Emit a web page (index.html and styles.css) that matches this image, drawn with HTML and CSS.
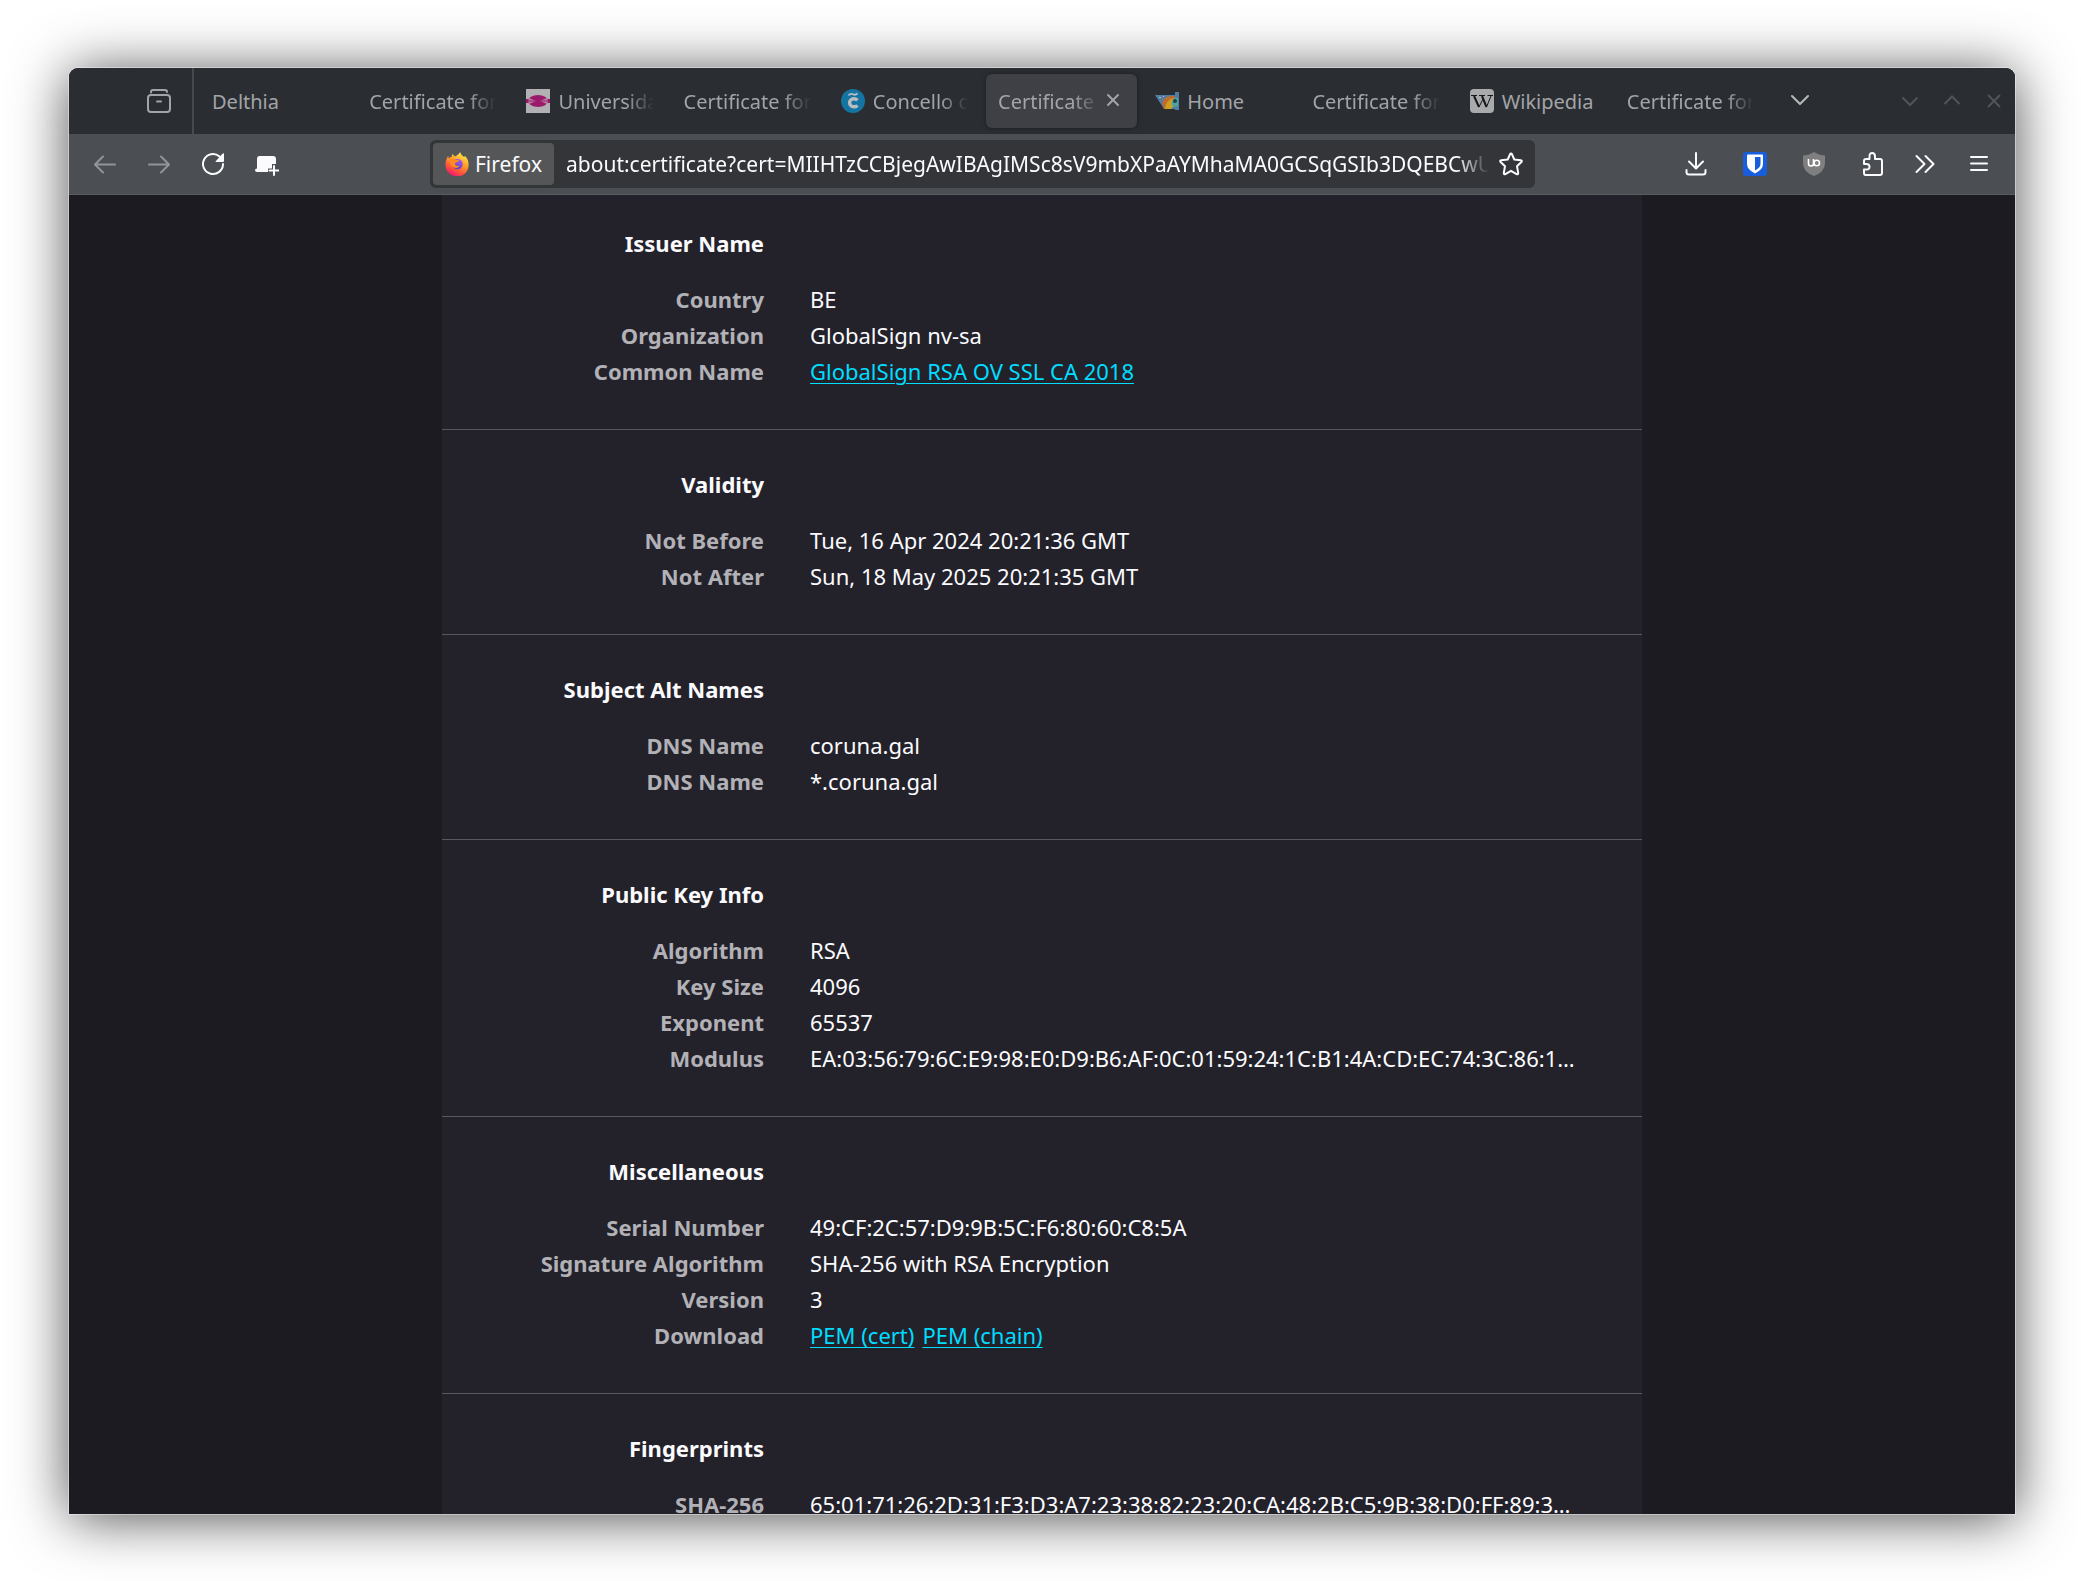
FILE: index.html
```html
<!DOCTYPE html>
<html lang="en">
<head>
<meta charset="utf-8">
<title>Certificate for coruna.gal</title>
<link rel="stylesheet" href="styles.css">
</head>
<body>
<div class="window">
  <header class="tabbar">
    <button class="recent" aria-label="View recent browsing">
      <svg class="icon" viewBox="0 0 24 24" fill="none" stroke="currentColor" stroke-width="2" stroke-linecap="round"><path d="M4 3.500V3Q4 1 6 1H18Q20 1 20 3"/><rect x="1" y="6" width="22" height="17" rx="3"/><path d="M10 12.500H14"/></svg>
    </button>
    <nav class="tabs">
      <a class="tab" href="#"><span class="tab-label">Delthia</span></a>
      <a class="tab" href="#"><span class="tab-label long">Certificate for</span></a>
      <a class="tab" href="#">
        <svg class="icon" viewBox="0 0 24 24"><path fill="#b1b1b3" d="M0 0h24v24H0z"/><ellipse cx="12" cy="12" rx="10" ry="6" fill="#9b1a6c"/><path fill="#9b1a6c" d="M0 10h3v4H0zM21 10h3v4h-3z"/><path fill="#b884a6" d="M3 9l7 3-7 3-1-3zM21 9l-7 3 7 3 1-3z"/><path fill="none" stroke="#9b1a6c" stroke-width="1" d="M0 12h24"/></svg>
        <span class="tab-label long">Universidade</span>
      </a>
      <a class="tab" href="#"><span class="tab-label long">Certificate for</span></a>
      <a class="tab" href="#">
        <svg class="icon" viewBox="0 0 24 24"><circle cx="12" cy="12" r="12" fill="#1474a2"/><path fill="none" stroke="#b9bdc2" stroke-width="3.400" d="M16.500 11.300Q15 9.800 12.600 9.800A4 4 0 0 0 12.600 17.800Q15 17.800 16.500 16.400"/><path fill="none" stroke="#b9bdc2" stroke-width="1.800" d="M7.500 6.500Q9.500 4 12 5.300T16.500 4.300"/></svg>
        <span class="tab-label long">Concello da</span>
      </a>
      <div class="tab tab-hover">
        <span class="tab-label long">Certificate for</span>
        <button class="tab-close" aria-label="Close tab"><svg class="icon" viewBox="0 0 24 24" fill="none" stroke="currentColor" stroke-width="2" stroke-linecap="round"><path d="M7 6l10 10M17 6L7 16"/></svg></button>
      </div>
      <a class="tab" href="#">
        <svg class="icon" viewBox="0 0 24 24"><path fill="#4f7da3" d="M0 6h20V3h4v18h-4v-1H9z"/><path fill="#c06a2c" d="M7 14Q9 6 19 7L21 9Q12 10 11 20H9z"/><path fill="#c9a024" d="M10 20Q11 10 19 9v8l-3 3z"/><path fill="#4da3a3" d="M17 12q2-4 6-3v8l-4 1q-3-2-2-6z"/><circle cx="20" cy="12" r="2" fill="#23404d"/><path fill="#a8bcc8" d="M4 8h2v1H4zM8 7h1v1H8z"/></svg>
        <span class="tab-label">Home</span>
      </a>
      <a class="tab" href="#"><span class="tab-label long">Certificate for</span></a>
      <a class="tab" href="#">
        <svg class="icon" viewBox="0 0 24 24"><rect width="24" height="24" rx="4" fill="#a9aaac"/><path fill="none" stroke="#17181a" stroke-width="1" d="M1 6.500h6M9 6.500h6M17.500 6.500H23"/><path fill="none" stroke="#17181a" stroke-width="2" d="M4 7l5 11M12 7l4.500 11"/><path fill="none" stroke="#17181a" stroke-width="1" d="M9 18l4-8M16.500 18L21 7"/></svg>
        <span class="tab-label">Wikipedia</span>
      </a>
      <a class="tab" href="#"><span class="tab-label long">Certificate for</span></a>
    </nav>
    <button class="all-tabs" aria-label="List all tabs"><svg class="icon" viewBox="0 0 24 24" fill="none" stroke="currentColor" stroke-width="2" stroke-linecap="round" stroke-linejoin="round"><path d="M4 7l8 8 8-8"/></svg></button>
    <div class="window-controls">
      <button aria-label="Minimize"><svg class="icon" viewBox="0 0 24 24" fill="none" stroke="currentColor" stroke-width="2"><path d="M4.500 8.500l7.500 7.500 7.500-7.500"/></svg></button>
      <button aria-label="Maximize"><svg class="icon" viewBox="0 0 24 24" fill="none" stroke="currentColor" stroke-width="2"><path d="M4.500 15l7.500-7.500 7.500 7.500"/></svg></button>
      <button aria-label="Close"><svg class="icon" viewBox="0 0 24 24" fill="none" stroke="currentColor" stroke-width="2"><path d="M6 6l12 12M18 6L6 18"/></svg></button>
    </div>
  </header>

  <div class="toolbar">
    <div class="nav-buttons">
      <button class="off" aria-label="Back" disabled><svg class="icon" viewBox="0 0 24 24" fill="none" stroke="currentColor" stroke-width="2" stroke-linecap="round" stroke-linejoin="round"><path d="M22 12.500H2.500M10 4.500l-8 8 8 8"/></svg></button>
      <button class="off" aria-label="Forward" disabled><svg class="icon" viewBox="0 0 24 24" fill="none" stroke="currentColor" stroke-width="2" stroke-linecap="round" stroke-linejoin="round"><path d="M2 12.500h19.500M14 4.500l8 8-8 8"/></svg></button>
      <button aria-label="Reload"><svg class="icon" viewBox="0 0 24 24" fill="none" stroke="currentColor" stroke-width="2" stroke-linecap="round"><path d="M22 12A10 10 0 1 1 18.500 4.400"/><path fill="currentColor" stroke="none" d="M23 2v7q0 1-1 1h-7q-1 0-.3-.8l6.700-7.500Q23 .5 23 2z"/></svg></button>
      <button aria-label="New window extension"><svg class="icon" viewBox="0 0 24 24"><path fill="currentColor" d="M4.500 4H18q3 0 3 3v5h-4v4.500h-4V20H2q-2-.2-2-2 0-1.500 2-1.500V7Q2 4 4.500 4z"/><path fill="none" stroke="currentColor" stroke-width="2" stroke-linecap="round" d="M19 14v9M14.500 18.500h9"/></svg></button>
    </div>
    <form class="urlbar">
      <button class="identity" type="button">
        <svg class="icon" viewBox="0 0 24 24">
          <defs>
            <linearGradient id="flame" x1="0.8" y1="0" x2="0.3" y2="1"><stop offset="0" stop-color="#fff44f"/><stop offset="0.4" stop-color="#ffa22c"/><stop offset="0.75" stop-color="#ff4f3c"/><stop offset="1" stop-color="#e8117f"/></linearGradient>
            <linearGradient id="globe" x1="0.6" y1="0" x2="0.4" y2="1"><stop offset="0" stop-color="#b060e8"/><stop offset="1" stop-color="#5340c8"/></linearGradient>
          </defs>
          <path fill="url(#flame)" d="M15 0q1 3 4 5l1-1q4 4 3.500 9.500A11.500 11.300 0 0 1 .5 13Q.3 8 3 4l1 2.500Q5 5 7 4.500L7 2q2 1 3 2.500 2-1 3-2Q14.500 1.500 15 0z"/>
          <circle cx="12.500" cy="12" r="5.200" fill="url(#globe)"/>
          <path fill="#ff8a1e" d="M5 7q4-1.500 6 1h3q-.5 2-3 2.500-2 1-.5 2.500 2 1.500 4.500.5-2 3.500-6 2Q4 13.500 5 7z"/>
        </svg>
        <span>Firefox</span>
      </button>
      <input class="address" type="text" aria-label="Address" value="about:certificate?cert=MIIHTzCCBjegAwIBAgIMSc8sV9mbXPaAYMhaMA0GCSqGSIb3DQEBCwUAMFAxCzAJBgNV">
      <button class="star" type="button" aria-label="Bookmark this page"><svg class="icon" viewBox="0 0 24 24" fill="none" stroke="currentColor" stroke-width="2" stroke-linejoin="round"><path d="M12 1.500Q12.600 1.500 13 2.300L15.300 7.500 21.800 8.300Q23.500 8.700 22.400 10L18 14.200 19.200 21Q19.200 22.800 17.600 22.100L12 18.800 6.400 22.100Q4.800 22.800 4.800 21L6 14.200 1.600 10Q.5 8.700 2.200 8.300L8.700 7.500 11 2.300Q11.400 1.500 12 1.500z"/></svg></button>
    </form>
    <div class="actions">
      <button aria-label="Downloads"><svg class="icon" viewBox="0 0 24 24" fill="none" stroke="currentColor" stroke-width="2" stroke-linecap="round" stroke-linejoin="round"><path d="M12 1v15M5 9.500l7 7 7-7M2.500 18v2q0 2.500 2.500 2.500h14q2.500 0 2.500-2.500v-2"/></svg></button>
      <button aria-label="Bitwarden"><svg class="icon" viewBox="0 0 24 24"><rect width="24" height="24" rx="3" fill="#175ddc"/><path fill="#fff" fill-rule="evenodd" d="M4 3.500Q4 2.500 5 2.500h14q1 0 1 1V12q0 5.500-8 9.500-8-4-8-9.500zM12 5v13.500q5.500-3 5.500-6.500V5z"/></svg></button>
      <button aria-label="uBlock Origin"><svg class="icon" viewBox="0 0 24 24"><path fill="#7f7f80" d="M12 0q6 3.500 11 3.500V11q0 9-11 13Q1 20 1 11V3.500Q6 3.500 12 0z"/><path fill="none" stroke="#fff" stroke-width="1.600" d="M6.500 7v4.500a2.500 2.500 0 0 0 5 0V7M11.500 11v3"/><circle cx="14.800" cy="11" r="2.700" fill="none" stroke="#fff" stroke-width="1.600"/></svg></button>
      <button aria-label="Extensions"><svg class="icon" viewBox="0 0 24 24" fill="none" stroke="currentColor" stroke-width="2" stroke-linejoin="round"><path d="M4 23h15q2 0 2-2V9q0-2-2-2h-5V4.500Q14 1 11.200 1T8.500 4.500V7H5Q3 7 3 9v3h2.500q3 0 3 2.800t-3 2.700H3V21q0 2 2 2z"/></svg></button>
      <button class="overflow" aria-label="More tools"><svg class="icon" viewBox="0 0 24 24" fill="none" stroke="currentColor" stroke-width="2" stroke-linecap="round" stroke-linejoin="round"><path d="M3.500 4l8 8-8 8M12.500 4l8 8-8 8"/></svg></button>
      <button class="menu" aria-label="Open application menu"><svg class="icon" viewBox="0 0 24 24" fill="none" stroke="currentColor" stroke-width="2" stroke-linecap="round"><path d="M4 5h16M4 11.500h16M4 18h16"/></svg></button>
    </div>
  </div>

  <main class="page">
    <article class="certificate">
      <section class="group">
        <h2>Issuer Name</h2>
        <dl>
          <dt>Country</dt><dd>BE</dd>
          <dt>Organization</dt><dd>GlobalSign nv-sa</dd>
          <dt>Common Name</dt><dd><a href="#">GlobalSign RSA OV SSL CA 2018</a></dd>
        </dl>
      </section>
      <section class="group">
        <h2>Validity</h2>
        <dl>
          <dt>Not Before</dt><dd>Tue, 16 Apr 2024 20:21:36 GMT</dd>
          <dt>Not After</dt><dd>Sun, 18 May 2025 20:21:35 GMT</dd>
        </dl>
      </section>
      <section class="group">
        <h2>Subject Alt Names</h2>
        <dl>
          <dt>DNS Name</dt><dd>coruna.gal</dd>
          <dt>DNS Name</dt><dd>*.coruna.gal</dd>
        </dl>
      </section>
      <section class="group">
        <h2>Public Key Info</h2>
        <dl>
          <dt>Algorithm</dt><dd>RSA</dd>
          <dt>Key Size</dt><dd>4096</dd>
          <dt>Exponent</dt><dd>65537</dd>
          <dt>Modulus</dt><dd>EA:03:56:79:6C:E9:98:E0:D9:B6:AF:0C:01:59:24:1C:B1:4A:CD:EC:74:3C:86:1…</dd>
        </dl>
      </section>
      <section class="group">
        <h2>Miscellaneous</h2>
        <dl>
          <dt>Serial Number</dt><dd>49:CF:2C:57:D9:9B:5C:F6:80:60:C8:5A</dd>
          <dt>Signature Algorithm</dt><dd>SHA-256 with RSA Encryption</dd>
          <dt>Version</dt><dd>3</dd>
          <dt>Download</dt><dd><a href="#">PEM (cert)</a><a href="#">PEM (chain)</a></dd>
        </dl>
      </section>
      <section class="group">
        <h2>Fingerprints</h2>
        <dl>
          <dt>SHA-256</dt><dd>65:01:71:26:2D:31:F3:D3:A7:23:38:82:23:20:CA:48:2B:C5:9B:38:D0:FF:89:3…</dd>
        </dl>
      </section>
    </article>
  </main>
</div>
</body>
</html>
```
FILE: styles.css
```css
* {
  box-sizing: border-box;
}

body {
  margin: 0;
  height: 100vh;
  padding: 68px 66px 67px 69px;
  background: #fff;
  font-family: "Noto Sans", sans-serif;
  font-size: 22px;
  color: #fbfbfe;
}

button {
  display: flex;
  align-items: center;
  justify-content: center;
  padding: 0;
  border: 0;
  background: none;
  color: inherit;
  font: inherit;
}

.icon {
  display: block;
  flex: none;
  width: 24px;
  height: 24px;
}

.window {
  display: flex;
  flex-direction: column;
  height: 100%;
  overflow: hidden;
  border-radius: 9px 9px 0 0;
  background: #1c1b22;
  box-shadow: 0 0 0 1px rgba(255, 255, 255, 0.4), 0 4px 56px rgba(0, 0, 0, 0.7);
}

/* Tab strip */

.tabbar {
  display: flex;
  flex: none;
  height: 66px;
  background: #2a2e32;
  color: #a3a4a7;
}

.recent {
  width: 125px;
  padding-left: 56px;
  border-right: 2px solid #47494d;
}

.tabs {
  display: flex;
  flex: 1;
  min-width: 0;
  align-items: center;
  padding: 0 3px;
}

.tab {
  display: flex;
  flex: 1 1 0;
  min-width: 0;
  align-items: center;
  gap: 8px;
  height: 54px;
  margin: 0 3px;
  padding: 0 12px;
  border-radius: 6px;
  color: inherit;
  font-size: 20px;
  text-decoration: none;
}

.tab-label {
  flex: 1;
  white-space: nowrap;
}

.tab-label.long {
  overflow: hidden;
  mask-image: linear-gradient(to left, transparent, #000 28px);
}

.tab-hover {
  gap: 0;
  background: #3e4045;
  box-shadow: 0 0 4px rgba(0, 0, 0, 0.4);
}

.all-tabs {
  width: 56px;
  color: #b9babc;
}

.window-controls {
  display: flex;
  padding: 0 0 0 61px;
  color: #515458;
}

.window-controls button {
  width: 42px;
}

/* Navigation toolbar */

.toolbar {
  display: flex;
  flex: none;
  align-items: center;
  height: 61px;
  padding: 0 5px 0 9px;
  border-bottom: 1px solid #5a5c5f;
  background: #4b4e52;
}

.nav-buttons,
.actions {
  display: flex;
}

.nav-buttons button {
  width: 54px;
  height: 48px;
}

.nav-buttons .off {
  color: #929497;
}

.urlbar {
  display: flex;
  flex: 1;
  min-width: 0;
  align-items: center;
  height: 48px;
  margin: 0 131px 0 136px;
  padding: 3px;
  border-radius: 6px;
  background: #343538;
}

.identity {
  gap: 6px;
  width: 121px;
  height: 42px;
  border-radius: 4px;
  background: #555658;
  font-size: 21px;
}

.address {
  flex: 1;
  min-width: 0;
  height: 42px;
  margin: 0 10px 0 12px;
  padding: 0;
  border: 0;
  outline: 0;
  background: none;
  color: #fbfbfe;
  font: inherit;
  font-size: 21px;
  mask-image: linear-gradient(to left, transparent, #000 32px);
}

.star {
  width: 24px;
  height: 42px;
  margin-right: 9px;
}

.actions button {
  width: 59px;
  height: 48px;
}

.actions .overflow {
  width: 46px;
}

.actions .menu {
  width: 62px;
}

/* Certificate details */

.page {
  flex: 1;
  min-height: 0;
  overflow: hidden;
}

.certificate {
  max-width: 1200px;
  margin: 0 auto;
  background: #23222b;
}

.group {
  padding: 36px 0 40px;
  border-top: 1px solid #59585e;
}

.group:first-child {
  padding-top: 30px;
  border-top: 0;
}

.group h2 {
  width: 322px;
  margin: 0 0 20px;
  font-size: 22px;
  font-weight: 700;
  line-height: 36px;
  text-align: right;
}

.group dl {
  display: grid;
  grid-template-columns: 322px 1fr;
  column-gap: 46px;
  margin: 0;
  line-height: 36px;
}

.group dt {
  color: #b2b1b6;
  font-weight: 700;
  text-align: right;
}

.group dd {
  display: flex;
  gap: 8px;
  margin: 0;
  white-space: nowrap;
}

.group a {
  color: #00ddff;
  text-decoration-thickness: 1px;
  text-underline-offset: 3px;
}
```
